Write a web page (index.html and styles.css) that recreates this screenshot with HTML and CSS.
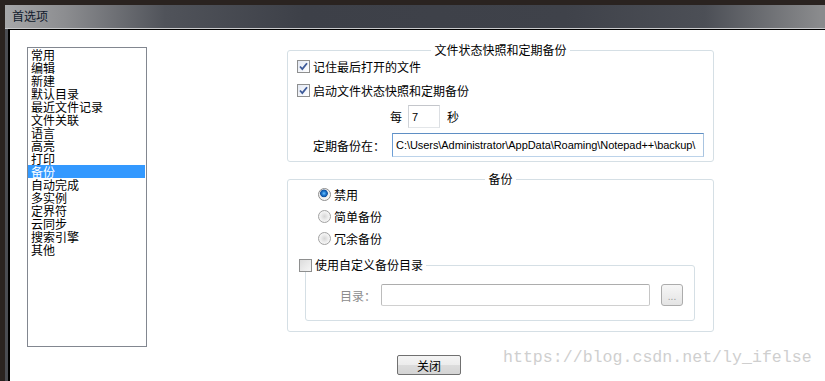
FILE: index.html
```html
<!DOCTYPE html>
<html lang="zh-CN">
<head>
<meta charset="utf-8">
<title>首选项</title>
<link rel="stylesheet" href="styles.css">
</head>
<body>
<div class="window">
  <div class="titlebar">首选项</div>
  <div class="frame">
    <div class="client">
      <ul class="list">
        <li>常用</li>
        <li>编辑</li>
        <li>新建</li>
        <li>默认目录</li>
        <li>最近文件记录</li>
        <li>文件关联</li>
        <li>语言</li>
        <li>高亮</li>
        <li>打印</li>
        <li class="sel">备份</li>
        <li>自动完成</li>
        <li>多实例</li>
        <li>定界符</li>
        <li>云同步</li>
        <li>搜索引擎</li>
        <li>其他</li>
      </ul>
      <div class="panel">
        <fieldset class="group g1">
          <legend class="title">文件状态快照和定期备份</legend>
          <div class="row chk first"><span class="cb checked"><svg width="9" height="9" viewBox="0 0 9 9"><path d="M1 4.5 L3.3 7 L8 1.2" fill="none" stroke="#3d5a99" stroke-width="1.8"/></svg></span><span>记住最后打开的文件</span></div>
          <div class="row chk second"><span class="cb checked"><svg width="9" height="9" viewBox="0 0 9 9"><path d="M1 4.5 L3.3 7 L8 1.2" fill="none" stroke="#3d5a99" stroke-width="1.8"/></svg></span><span>启动文件状态快照和定期备份</span></div>
          <div class="row every"><span class="every-lbl">每</span><span class="input sec">7</span><span class="sec-lbl">秒</span></div>
          <div class="row path"><span class="path-lbl">定期备份在：</span><span class="input path-in">C:\Users\Administrator\AppData\Roaming\Notepad++\backup\</span></div>
        </fieldset>
        <fieldset class="group g2">
          <legend class="title">备份</legend>
          <div class="row radio r1"><span class="rb on"></span><span>禁用</span></div>
          <div class="row radio"><span class="rb"></span><span>简单备份</span></div>
          <div class="row radio"><span class="rb"></span><span>冗余备份</span></div>
          <fieldset class="sub">
            <legend class="sub-title"><span class="cb"></span><span>使用自定义备份目录</span></legend>
            <div class="row dir"><span class="dim">目录：</span><span class="input dir-in"></span><span class="dots">...</span></div>
          </fieldset>
        </fieldset>
        <div class="btn-row"><span class="button">关闭</span></div>
      </div>
    </div>
  </div>
</div>
<div class="watermark">https://blog.csdn.net/ly_ifelse</div>
</body>
</html>
```

FILE: styles.css
```css
html, body {
  margin: 0;
  padding: 0;
}
body {
  background: #2a2320;
  width: 825px;
  height: 381px;
  overflow: hidden;
  position: relative;
  font-family: "Noto Sans CJK SC", "Liberation Sans", sans-serif;
  font-size: 12px;
  color: #000;
}
.window {
  margin: 5px 0 0 5px;
  height: 376px;
  background: #55575c;
  display: flex;
  flex-direction: column;
}
.titlebar {
  height: 23px;
  line-height: 22px;
  padding-left: 7px;
  color: #101a2c;
  background: linear-gradient(to right, #a6a7a9 0px, #8c8d90 60px, #50535a 160px, #3d4048 300px, #3f424a 560px, #4c4f56 700px, #8a8b8d 815px);
  border-bottom: 1px solid #c9cacc;
}
.frame {
  flex: 1;
  padding-left: 3px;
  background: #4a4c52;
  display: flex;
}
.client {
  flex: 1;
  background: #fff;
  border-left: 2px solid #000;
  border-top: 1px solid #000;
  display: flex;
  align-items: flex-start;
}
.list {
  list-style: none;
  margin: 17px 0 0 17px;
  padding: 0;
  width: 118px;
  height: 298px;
  border: 1px solid #828790;
  line-height: 13px;
  font-size: 12px;
}
.list li {
  padding-left: 3px;
  height: 13px;
  margin-right: 1px;
  white-space: nowrap;
}
.list li.sel {
  background: #3399ff;
  color: #fff;
}
.panel {
  margin: 13px 0 0 140px;
  width: 427px;
  display: flex;
  flex-direction: column;
}
.group {
  margin: 0;
  border: 1px solid #d5dfe5;
  border-radius: 3px;
  padding: 0 9px;
  min-width: 0;
}
.title {
  margin: 0 auto;
  padding: 0 3px;
  line-height: 14px;
  height: 14px;
}
.row {
  display: flex;
  align-items: center;
  white-space: nowrap;
}
.chk {
  height: 16px;
}
.chk.first {
  margin-top: 1px;
}
.chk.second {
  margin-top: 8px;
}
.cb {
  width: 11px;
  height: 11px;
  border: 1px solid #8e8f8f;
  background: linear-gradient(135deg, #dcdcdc, #f6f6f6);
  margin-right: 3px;
  display: flex;
  align-items: center;
  justify-content: center;
  flex: none;
}
.cb.checked {
  background: linear-gradient(135deg, #e3e8f3, #ffffff);
}
.every {
  height: 23px;
  margin-top: 7px;
}
.every-lbl {
  margin-left: 93px;
}
.input {
  box-sizing: border-box;
  border: 1px solid #abadb3;
  background: #fff;
  display: flex;
  align-items: center;
  font-family: "Liberation Sans", sans-serif;
  font-size: 11px;
}
.sec {
  width: 32px;
  height: 23px;
  margin-left: 6px;
  padding-left: 3px;
  border-color: #c4c6cb #dcdfe3 #e3e6e9 #d0d3d8;
}
.sec-lbl {
  margin-left: 7px;
}
.path {
  height: 24px;
  margin-top: 5px;
  margin-bottom: 4px;
}
.path-lbl {
  margin-left: 16px;
}
.path-in {
  margin-left: 7px;
  width: 312px;
  height: 24px;
  padding-left: 3px;
  border-color: #5f8fc4 #a9c4e0 #bcd3ea #6d9fd6;
  overflow: hidden;
  letter-spacing: -0.06px;
}
.g2 {
  margin-top: 10px;
  padding-bottom: 10px;
}
.radio {
  height: 16px;
  margin-top: 6px;
}
.radio.r1 {
  margin-top: 0;
}
.rb {
  width: 11px;
  height: 11px;
  border-radius: 50%;
  border: 1px solid #a2a2a2;
  background: radial-gradient(circle at 50% 50%, #d6d6d6 0, #e9e9e9 3px, #f4f4f4 5px);
  margin-left: 21px;
  margin-right: 3px;
  flex: none;
}
.rb.on {
  border-color: #8d8d8d;
  background: radial-gradient(circle at 45% 40%, #6fc2ff 0, #1e79d0 2px, #0f4f9e 3.5px, #ececec 4.2px, #f6f6f6 6px);
}
.sub {
  margin: 12px 9px 0 8px;
  border: 1px solid #d5dfe5;
  border-radius: 3px;
  padding: 0 0 14px 0;
  min-width: 0;
}
.sub-title {
  margin-left: -7px;
  padding: 0 3px 0 0;
  line-height: 14px;
  height: 14px;
  display: flex;
  align-items: center;
}
.dir {
  height: 22px;
  margin-top: 12px;
}
.dim {
  margin-left: 34px;
  color: #8d8d8d;
}
.dir-in {
  margin-left: 5px;
  width: 269px;
  height: 22px;
  border-color: #adadad #c6c6c6 #d0d0d0 #bcbcbc;
  border-radius: 2px;
}
.dots {
  margin-left: 11px;
  box-sizing: border-box;
  width: 22px;
  height: 22px;
  border: 1px solid #acacac;
  border-radius: 3px;
  background: linear-gradient(#f6f6f6, #e4e4e4);
  color: #9a9a9a;
  font-family: "Liberation Sans", sans-serif;
  font-size: 10px;
  display: flex;
  align-items: center;
  justify-content: center;
  padding-top: 2px;
}
.btn-row {
  margin-top: 23px;
  display: flex;
}
.button {
  margin-left: 110px;
  box-sizing: border-box;
  width: 64px;
  height: 20px;
  border: 1px solid #707070;
  border-radius: 2px;
  background: linear-gradient(#f4f4f4 0, #ececec 50%, #dcdcdc 51%, #d4d4d4 100%);
  display: flex;
  align-items: center;
  justify-content: center;
}
.watermark {
  position: absolute;
  left: 503px;
  top: 348px;
  font-family: "Liberation Mono", monospace;
  font-size: 16.6px;
  line-height: 20px;
  color: #cfcfcf;
  white-space: nowrap;
}
```
